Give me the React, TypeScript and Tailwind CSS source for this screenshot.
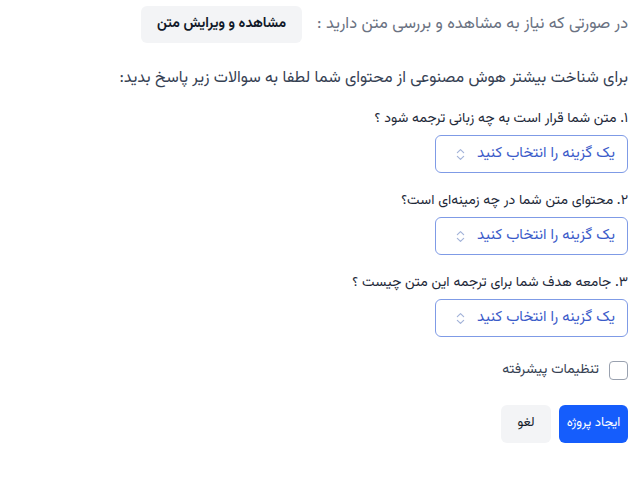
import React from "react";

const questions = [
  "۱. متن شما قرار است به چه زبانی ترجمه شود ؟",
  "۲. محتوای متن شما در چه زمینه‌ای است؟",
  "۳. جامعه هدف شما برای ترجمه این متن چیست ؟",
];

function UpDown() {
  return (
    <svg viewBox="0 0 10 14" className="w-[9px] h-[13px]" fill="none" stroke="#a3b3d9" strokeWidth={1.3} strokeLinecap="round" strokeLinejoin="round">
      <path d="M1.5 5 5 1.5 8.5 5" />
      <path d="M1.5 9 5 12.5 8.5 9" />
    </svg>
  );
}

function SelectBox() {
  return (
    <button className="flex items-center gap-3 w-[193px] h-[38px] rounded-md border border-[#7f9be6] bg-white pr-3 text-[15px] text-[#3b5bc9]">
      <span>یک گزینه را انتخاب کنید</span>
      <UpDown />
    </button>
  );
}

export default function App() {
  return (
    <div
      dir="rtl"
      className="min-h-screen bg-white pr-3 pt-1.5 text-[14px]"
      style={{ fontFamily: '"Vazirmatn", "Noto Sans Arabic", "DejaVu Sans", sans-serif' }}
    >
      {/* top row */}
      <div className="flex items-center gap-[15px]">
        <span className="text-[16.4px] text-gray-500">در صورتی که نیاز به مشاهده و بررسی متن دارید :</span>
        <button className="h-[37px] w-[161px] rounded-md bg-gray-100 text-[14px] font-bold text-gray-900">
          مشاهده و ویرایش متن
        </button>
      </div>

      <p className="mt-[25px] h-5 leading-5 text-[16.1px] text-gray-700">
        برای شناخت بیشتر هوش مصنوعی از محتوای شما لطفا به سوالات زیر پاسخ بدید:
      </p>

      <div className="mt-[21px] flex flex-col gap-[18px]">
        {questions.map((q) => (
          <div key={q} className="flex flex-col gap-1.5">
            <label className="h-5 leading-5 text-gray-800">{q}</label>
            <SelectBox />
          </div>
        ))}
      </div>

      <label className="mt-[23px] flex items-center gap-2.5">
        <span className="w-[19px] h-[19px] rounded border border-gray-400 bg-white" />
        <span className="text-gray-700">تنظیمات پیشرفته</span>
      </label>

      <div className="mt-6 flex gap-2">
        <button className="h-[38px] w-[69px] rounded-md bg-blue-600 text-[13px] text-white">ایجاد پروژه</button>
        <button className="h-[38px] w-[50px] rounded-md bg-gray-100 text-[13px] text-gray-900">لغو</button>
      </div>
    </div>
  );
}
